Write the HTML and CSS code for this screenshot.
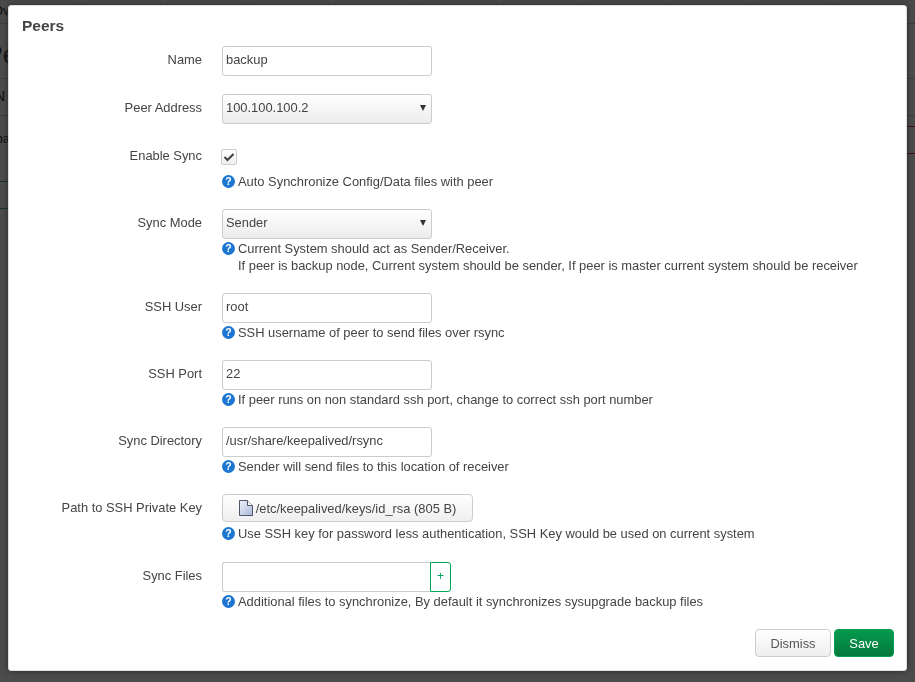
FILE: index.html
```html
<!DOCTYPE html>
<html lang="en">
<head>
  <meta charset="UTF-8" />
  <title>Peers</title>
  <link rel="stylesheet" href="styles.css">
</head>
<body>
  <!-- page behind the dialog, only its edges show -->
  <div class="page">
    <ul class="page-tabs">
      <li>Ov</li><li></li><li></li><li></li><li></li><li></li><li></li><li></li><li></li><li></li><li></li>
    </ul>
    <h2 class="page-title">Pe</h2>
    <div class="page-row">N</div>
    <div class="page-graph">
      <div class="graph-left">
        <div class="graph-name">ba</div>
        <div class="graph-line graph-line-first graph-line-green"></div>
        <div class="graph-line graph-line-green"></div>
      </div>
      <div class="graph-right">
        <div class="graph-line graph-line-first graph-line-red"></div>
        <div class="graph-line graph-line-red"></div>
      </div>
    </div>
  </div>
  <div class="overlay"></div>

  <div class="modal">
    <h4 class="modal-title">Peers</h4>

    <div class="form-row">
      <label class="form-label">Name</label>
      <div class="form-field">
        <input class="text-input" type="text" value="backup" />
      </div>
    </div>

    <div class="form-row">
      <label class="form-label">Peer Address</label>
      <div class="form-field">
        <div class="select-wrap">
          <select class="select-input"><option>100.100.100.2</option></select>
        </div>
      </div>
    </div>

    <div class="form-row">
      <label class="form-label">Enable Sync</label>
      <div class="form-field">
        <div class="check-wrap">
          <span class="check-box">
            <svg width="12" height="10" viewBox="0 0 12 10"><path d="M1.5 5 L4.5 8 L10.5 2" fill="none" stroke="#404040" stroke-width="2"/></svg>
          </span>
        </div>
        <div class="form-help"><span class="help-icon">?</span>Auto Synchronize Config/Data files with peer</div>
      </div>
    </div>

    <div class="form-row">
      <label class="form-label">Sync Mode</label>
      <div class="form-field">
        <div class="select-wrap">
          <select class="select-input"><option>Sender</option></select>
        </div>
        <div class="form-help"><span class="help-icon">?</span>Current System should act as Sender/Receiver.<br>If peer is backup node, Current system should be sender, If peer is master current system should be receiver</div>
      </div>
    </div>

    <div class="form-row">
      <label class="form-label">SSH User</label>
      <div class="form-field">
        <input class="text-input" type="text" value="root" />
        <div class="form-help"><span class="help-icon">?</span>SSH username of peer to send files over rsync</div>
      </div>
    </div>

    <div class="form-row">
      <label class="form-label">SSH Port</label>
      <div class="form-field">
        <input class="text-input" type="text" value="22" />
        <div class="form-help"><span class="help-icon">?</span>If peer runs on non standard ssh port, change to correct ssh port number</div>
      </div>
    </div>

    <div class="form-row">
      <label class="form-label">Sync Directory</label>
      <div class="form-field">
        <input class="text-input" type="text" value="/usr/share/keepalived/rsync" />
        <div class="form-help"><span class="help-icon">?</span>Sender will send files to this location of receiver</div>
      </div>
    </div>

    <div class="form-row">
      <label class="form-label">Path to SSH Private Key</label>
      <div class="form-field">
        <div class="file-wrap">
          <button class="file-btn" type="button">
            <svg width="14" height="16" viewBox="0 0 14 16">
              <defs>
                <linearGradient id="page-fill" x1="0" y1="0" x2="1" y2="1">
                  <stop offset="0" stop-color="#eef2fa"/>
                  <stop offset="1" stop-color="#a9b9da"/>
                </linearGradient>
              </defs>
              <path d="M.5 .5 H8.5 L13.5 5.5 V15.5 H.5 Z" fill="url(#page-fill)" stroke="#4d566b"/>
              <path d="M8.5 .5 V5.5 H13.5" fill="#fff" stroke="#4d566b"/>
            </svg>
            /etc/keepalived/keys/id_rsa (805 B)
          </button>
        </div>
        <div class="form-help form-help-tight"><span class="help-icon">?</span>Use SSH key for password less authentication, SSH Key would be used on current system</div>
      </div>
    </div>

    <div class="form-row">
      <label class="form-label">Sync Files</label>
      <div class="form-field">
        <div class="add-group">
          <input class="text-input add-input" type="text" />
          <button class="add-btn" type="button">+</button>
        </div>
        <div class="form-help"><span class="help-icon">?</span>Additional files to synchronize, By default it synchronizes sysupgrade backup files</div>
      </div>
    </div>

    <div class="modal-footer">
      <button class="btn" type="button">Dismiss</button>
      <button class="btn btn-save" type="button">Save</button>
    </div>
  </div>
</body>
</html>
```

FILE: styles.css
```css
html, body {
  height: 100%;
}

body {
  margin: 0;
  overflow: hidden;
  background: #fff;
  font-family: "Liberation Sans", Arial, sans-serif;
  font-size: 12.9px;
  line-height: 17px;
  color: #444;
}

/* Page behind */
.page {
  height: 100%;
  color: #333;
}

.page-tabs {
  display: flex;
  gap: 5px;
  margin: 0;
  padding: 0;
  height: 23px;
  list-style: none;
  border-bottom: 1px solid #ccc;
  line-height: 20px;
}

.page-tabs li {
  width: 78px;
  border: 1px solid #eee;
  border-bottom: 0;
  text-indent: -8px;
}

.page-title {
  margin: 0;
  height: 54px;
  font-size: 28px;
  font-weight: normal;
  line-height: 62px;
  text-indent: -16px;
  border-bottom: 1px solid #ccc;
}

.page-row {
  height: 36px;
  line-height: 34px;
  font-size: 14px;
  text-indent: -5px;
  border-bottom: 1px solid #ccc;
}

.page-graph {
  display: flex;
  justify-content: space-between;
}

.graph-left,
.graph-right {
  width: 20px;
}

.graph-name {
  height: 65px;
  line-height: 46px;
  font-size: 12px;
  text-indent: -4px;
}

.graph-right {
  padding-top: 10px;
}

.graph-line {
  height: 26px;
  border-bottom: 1px solid;
}

.graph-line-first {
  height: 0;
}

.graph-line-green {
  border-color: #3fae6a;
}

.graph-line-red {
  border-color: #c62828;
}

.overlay {
  position: fixed;
  inset: 0;
  background: rgba(0, 0, 0, 0.7);
}

/* Dialog */
.modal {
  position: absolute;
  top: 5px;
  left: 8px;
  box-sizing: border-box;
  width: 899px;
  height: 666px;
  padding: 11px 12px 13px 13px;
  background: #fff;
  border: 1px solid #ddd;
  border-radius: 3px;
  box-shadow: 0 0 6px #2a2a2a;
}

.modal-title {
  margin: 0 0 11px;
  font-size: 15.5px;
  line-height: 18px;
  font-weight: bold;
}

.form-row {
  display: grid;
  grid-template-columns: 180px 1fr;
  column-gap: 20px;
  margin-bottom: 18px;
}

.form-label {
  padding-top: 5px;
  text-align: right;
}

.text-input,
.select-input {
  display: block;
  box-sizing: border-box;
  width: 210px;
  height: 30px;
  margin: 0;
  padding: 0 3px 4px;
  border: 1px solid #ccc;
  border-radius: 3px;
  font: inherit;
  color: #444;
  background: #fff;
}

.select-wrap {
  position: relative;
  width: 210px;
}

.select-wrap::after {
  content: "";
  position: absolute;
  top: 11px;
  right: 6px;
  border-style: solid;
  border-width: 6px 3px 0;
  border-color: #333 transparent transparent;
}

.select-input {
  appearance: none;
  background: linear-gradient(#fff, #ececec);
}

.check-wrap {
  display: flex;
  align-items: center;
  height: 30px;
  margin-left: -1px;
}

.check-box {
  display: flex;
  align-items: center;
  justify-content: center;
  box-sizing: border-box;
  width: 16px;
  height: 16px;
  border: 1px solid #ccc;
  border-radius: 2px;
  background: linear-gradient(#fff, #f0f0f0);
}

.form-help {
  margin-top: 1px;
  padding-bottom: 1px;
  padding-left: 16px;
  white-space: nowrap;
}

.form-help-tight {
  margin-top: 0;
  padding-bottom: 2px;
}

.help-icon {
  display: inline-block;
  width: 13px;
  height: 13px;
  margin-left: -16px;
  margin-right: 3px;
  border-radius: 50%;
  background: #1c76d2;
  color: #fff;
  font-size: 10.5px;
  font-weight: bold;
  line-height: 13px;
  text-align: center;
  vertical-align: 1px;
}

.file-wrap {
  height: 31px;
}

.file-btn {
  display: flex;
  align-items: center;
  justify-content: center;
  gap: 3px;
  box-sizing: border-box;
  width: 251px;
  height: 28px;
  padding: 0;
  border: 1px solid #ccc;
  border-radius: 4px;
  background: linear-gradient(#fff, #efefef);
  font: inherit;
  color: #444;
}

.add-group {
  display: flex;
}

.add-input {
  width: 208px;
  border-right: 0;
  border-radius: 3px 0 0 3px;
}

.add-btn {
  box-sizing: border-box;
  width: 21px;
  height: 30px;
  padding: 0 0 2px;
  border: 1px solid #00a65a;
  border-radius: 0 3px 3px 0;
  background: #fff;
  color: #00a65a;
  font: inherit;
  font-size: 12px;
}

.modal-footer {
  display: flex;
  justify-content: flex-end;
  gap: 3px;
}

.btn {
  box-sizing: border-box;
  height: 28px;
  width: 76px;
  padding: 0;
  border: 1px solid #ccc;
  border-radius: 4px;
  background: linear-gradient(#fff, #eee);
  font: inherit;
  color: #555;
}

.btn-save {
  width: 60px;
  border-color: #05a050;
  background: linear-gradient(#049a4e, #037a3c);
  color: #fff;
}
```
